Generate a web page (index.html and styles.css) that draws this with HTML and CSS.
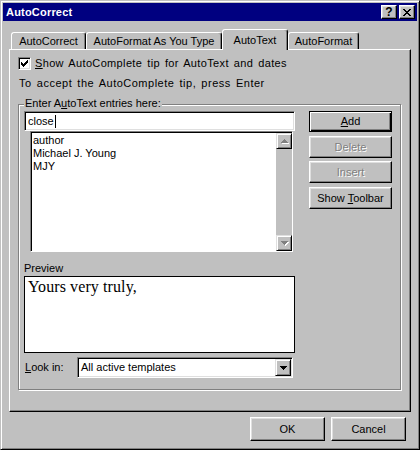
FILE: index.html
```html
<!DOCTYPE html>
<html>
<head>
<meta charset="utf-8">
<link rel="stylesheet" href="styles.css">
</head>
<body>
<div class="window">
  <div class="titlebar">
    <span class="title">AutoCorrect</span>
    <div class="tbtns">
      <span class="tbtn help">?</span>
      <span class="tbtn">
        <svg width="8" height="7" viewBox="0 0 8 7" shape-rendering="crispEdges"><path d="M0 0h2v1h-2zM6 0h2v1h-2zM1 1h2v1h-2zM5 1h2v1h-2zM2 2h4v1h-4zM3 3h2v1h-2zM2 4h4v1h-4zM1 5h2v1h-2zM5 5h2v1h-2zM0 6h2v1h-2zM6 6h2v1h-2z" fill="#000"/></svg>
      </span>
    </div>
  </div>
  <div class="content">
    <div class="tabs">
      <div class="tab w-ac">AutoCorrect</div>
      <div class="tab w-ayt">AutoFormat As You Type</div>
      <div class="tab active">AutoText</div>
      <div class="tab w-af">AutoFormat</div>
    </div>
    <div class="panel">
      <div class="check-row">
        <span class="checkbox">
          <svg width="7" height="7" viewBox="0 0 7 7" shape-rendering="crispEdges"><path d="M0 2h1v3h-1zM1 3h1v3h-1zM2 4h1v3h-1zM3 3h1v3h-1zM4 2h1v3h-1zM5 1h1v3h-1zM6 0h1v3h-1z" fill="#000"/></svg>
        </span>
        <span class="check-label"><u>S</u>how AutoComplete tip for AutoText and dates</span>
      </div>
      <div class="hint">To accept the AutoComplete tip, press Enter</div>
      <div class="group">
        <span class="group-label">Enter A<u>u</u>toText entries here:</span>
        <div class="left-col">
          <div class="textbox"><span>close</span><span class="caret"></span></div>
          <div class="listbox">
            <div class="items">
              <div>author</div>
              <div>Michael J. Young</div>
              <div>MJY</div>
            </div>
            <div class="scrollbar">
              <div class="sbtn">
                <svg width="9" height="6" viewBox="0 0 9 6" shape-rendering="crispEdges"><path d="M4 1h1v1h-1zM3 2h3v1h-3zM2 3h5v1h-5zM1 4h7v1h-7z" fill="#fff" transform="translate(1,1)"/><path d="M4 1h1v1h-1zM3 2h3v1h-3zM2 3h5v1h-5zM1 4h7v1h-7z" fill="#808080"/></svg>
              </div>
              <div class="track"></div>
              <div class="sbtn">
                <svg width="9" height="6" viewBox="0 0 9 6" shape-rendering="crispEdges"><path d="M1 1h7v1h-7zM2 2h5v1h-5zM3 3h3v1h-3zM4 4h1v1h-1z" fill="#fff" transform="translate(1,1)"/><path d="M1 1h7v1h-7zM2 2h5v1h-5zM3 3h3v1h-3zM4 4h1v1h-1z" fill="#808080"/></svg>
              </div>
            </div>
          </div>
          <div class="preview-label">Preview</div>
          <div class="preview">Yours very truly,</div>
          <div class="lookin">
            <span class="lookin-label"><u>L</u>ook in:</span>
            <div class="combo">
              <span class="combo-text">All active templates</span>
              <span class="dropbtn">
                <svg width="7" height="4" viewBox="0 0 7 4" shape-rendering="crispEdges"><path d="M0 0h7v1h-7zM1 1h5v1h-5zM2 2h3v1h-3zM3 3h1v1h-1z" fill="#000"/></svg>
              </span>
            </div>
          </div>
        </div>
        <div class="right-col">
          <div class="btn default"><span><u>A</u>dd</span></div>
          <div class="btn disabled b-delete"><span>Delete</span></div>
          <div class="btn disabled b-insert"><span>Insert</span></div>
          <div class="btn b-toolbar"><span>Show <u>T</u>oolbar</span></div>
        </div>
      </div>
    </div>
    <div class="footer">
      <div class="btn fbtn"><span>OK</span></div>
      <div class="btn fbtn"><span>Cancel</span></div>
    </div>
  </div>
</div>
</body>
</html>
```

FILE: styles.css
```css
* { box-sizing: border-box; }

html, body {
  margin: 0;
  padding: 0;
  background: #c0c0c0;
}

body {
  font: 11px/13px "Liberation Sans", Arial, sans-serif;
  color: #000;
}

u { text-decoration: underline; text-underline-offset: 1px; }

.window {
  width: 420px;
  height: 450px;
  background: #c0c0c0;
  border: 1px solid;
  border-color: #c0c0c0 #000 #000 #c0c0c0;
  box-shadow: inset 1px 1px #fff, inset -1px -1px #808080;
  padding: 2px;
  display: flex;
  flex-direction: column;
}

/* Title bar */
.titlebar {
  height: 18px;
  flex: none;
  background: #000080;
  color: #fff;
  display: flex;
  align-items: center;
  justify-content: space-between;
  padding: 0 2px 0 3px;
}

.title {
  font-weight: bold;
  font-size: 11px;
  letter-spacing: 0.2px;
}

.tbtns {
  display: flex;
  gap: 2px;
}

.tbtn {
  width: 16px;
  height: 14px;
  background: #c0c0c0;
  border: 1px solid;
  border-color: #fff #000 #000 #fff;
  box-shadow: inset -1px -1px #808080, inset 1px 1px #dfdfdf;
  display: flex;
  align-items: center;
  justify-content: center;
  color: #000;
}

.tbtn.help {
  font-weight: bold;
  font-size: 12px;
  line-height: 11px;
  padding-top: 1px;
}

/* Content */
.content {
  flex: 1;
  display: flex;
  flex-direction: column;
  padding: 8px 6px 0 6px;
}

.tabs {
  height: 20px;
  flex: none;
  display: flex;
  align-items: flex-end;
  padding-left: 2px;
}

.tab {
  height: 17px;
  border: 1px solid;
  border-bottom: none;
  border-color: #fff #000 transparent #fff;
  box-shadow: inset -1px 0 #808080;
  border-radius: 3px 3px 0 0;
  padding-top: 2px;
  text-align: center;
  white-space: nowrap;
  background: #c0c0c0;
}

.w-ac { width: 75px; }
.w-ayt { width: 136px; }
.w-af { width: 71px; }

.tab.active {
  width: 66px;
  height: 21px;
  margin-bottom: -1px;
  padding-top: 4px;
  position: relative;
  z-index: 1;
}

.panel {
  height: 363px;
  flex: none;
  border: 1px solid;
  border-color: #fff #000 #000 #fff;
  box-shadow: inset -1px -1px #808080;
  padding: 7px 0 0 8px;
}

.check-row {
  display: flex;
  align-items: center;
  gap: 4px;
  height: 13px;
}

.check-label {
  letter-spacing: 0.35px;
  word-spacing: 1.6px;
  white-space: nowrap;
}

.checkbox {
  width: 13px;
  height: 13px;
  flex: none;
  background: #fff;
  border: 1px solid;
  border-color: #808080 #fff #fff #808080;
  box-shadow: inset 1px 1px #000, inset -1px -1px #dfdfdf;
  display: flex;
  align-items: center;
  justify-content: center;
}

.hint {
  margin-top: 7px;
  padding-left: 1px;
  letter-spacing: 0.5px;
  word-spacing: 1.6px;
  white-space: nowrap;
}

/* Group box */
.group {
  margin-top: 14px;
  width: 383px;
  height: 286px;
  border: 1px solid #808080;
  box-shadow: inset 1px 1px #fff, 1px 1px #fff;
  position: relative;
  display: flex;
  gap: 14px;
  padding: 6px 0 0 5px;
}

.group-label {
  position: absolute;
  top: -8px;
  left: 5px;
  padding: 0 1px;
  background: #c0c0c0;
  white-space: nowrap;
}

.left-col {
  width: 271px;
  display: flex;
  flex-direction: column;
}

.textbox {
  height: 20px;
  background: #fff;
  border: 1px solid;
  border-color: #808080 #fff #fff #808080;
  box-shadow: inset 1px 1px #000, inset -1px -1px #dfdfdf;
  padding: 3px 0 0 3px;
  display: flex;
  align-items: flex-start;
}

.caret {
  display: inline-block;
  width: 1px;
  height: 13px;
  background: #000;
  margin-left: 1px;
}

.listbox {
  margin-left: 6px;
  width: 263px;
  height: 121px;
  background: #fff;
  border: 1px solid;
  border-color: #808080 #fff #fff #808080;
  box-shadow: inset 1px 1px #000;
  display: flex;
  padding: 1px 0 0 1px;
}

.items {
  flex: 1;
  padding: 1px 0 0 1px;
}

.scrollbar {
  width: 16px;
  display: flex;
  flex-direction: column;
  background: #c0c0c0;
}

.sbtn {
  height: 16px;
  flex: none;
  background: #c0c0c0;
  border: 1px solid;
  border-color: #dfdfdf #000 #000 #dfdfdf;
  box-shadow: inset 1px 1px #fff, inset -1px -1px #808080;
  display: flex;
  align-items: center;
  justify-content: center;
}

.track { flex: 1; }

.preview-label {
  margin-top: 10px;
}

.preview {
  margin-top: 1px;
  height: 77px;
  background: #fff;
  border: 1px solid #000;
  padding: 1px 0 0 3px;
  font: 16px/18px "Liberation Serif", "Times New Roman", serif;
  letter-spacing: 0.1px;
}

.lookin {
  margin-top: 4px;
  display: flex;
  align-items: center;
}

.lookin-label {
  width: 53px;
  padding-left: 1px;
}

.combo {
  width: 216px;
  height: 21px;
  background: #fff;
  border: 1px solid;
  border-color: #808080 #fff #fff #808080;
  box-shadow: inset 1px 1px #000, inset -1px -1px #dfdfdf;
  display: flex;
  padding: 1px;
}

.combo-text {
  flex: 1;
  padding: 2px 0 0 2px;
}

.dropbtn {
  width: 16px;
  height: 17px;
  background: #c0c0c0;
  border: 1px solid;
  border-color: #dfdfdf #000 #000 #dfdfdf;
  box-shadow: inset 1px 1px #fff, inset -1px -1px #808080;
  display: flex;
  align-items: center;
  justify-content: center;
}

/* Buttons */
.right-col {
  width: 83px;
  display: flex;
  flex-direction: column;
}

.btn {
  height: 22px;
  background: #c0c0c0;
  border: 1px solid;
  border-color: #fff #000 #000 #fff;
  box-shadow: inset -1px -1px #808080, inset 1px 1px #dfdfdf;
  display: flex;
  align-items: center;
  justify-content: center;
  white-space: nowrap;
}

.btn.default {
  height: 21px;
  border-color: #000;
  box-shadow: inset 1px 1px #fff, inset -1px -1px #000, inset -2px -2px #808080;
}

.btn.disabled {
  color: #808080;
  text-shadow: 1px 1px #fff;
}

.b-delete { margin-top: 4px; }
.b-insert { margin-top: 3px; }
.b-toolbar { margin-top: 4px; }

.footer {
  margin-top: 5px;
  display: flex;
  justify-content: flex-end;
  gap: 6px;
  padding-right: 5px;
}

.fbtn {
  width: 75px;
  height: 24px;
}
```
